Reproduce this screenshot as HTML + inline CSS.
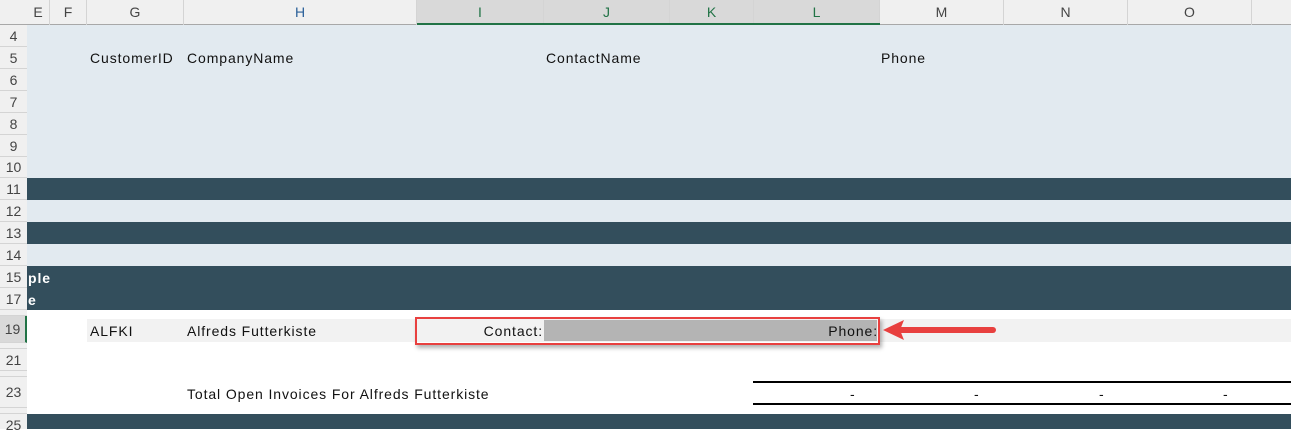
<!DOCTYPE html>
<html><head><style>
body{margin:0;width:1291px;height:429px;overflow:hidden;background:#fff;font-family:"Century Gothic","Liberation Sans",sans-serif;position:relative}
div{position:absolute;box-sizing:border-box}
.t{font-size:14px;color:#111;white-space:nowrap;line-height:16px;letter-spacing:0.9px}
.ch{top:0;height:25px;font-size:14px;color:#444;text-align:center;line-height:25px;border-right:1px solid #d4d4d4}
.rh{left:0;width:27px;font-size:14px;color:#444;text-align:center;background:#f0f0f0;border-bottom:1px solid #d4d4d4}
.dk{left:27px;width:1264px;background:#334e5c}
.lt{left:27px;width:1264px;background:#e2eaf0}
</style></head><body>
<div style="left:0;top:0;width:1291px;height:25px;background:#f0f0f0;border-bottom:1px solid #a8a8a8"></div>
<div style="left:417px;top:0;width:463px;height:25px;background:#d9d9d9;border-bottom:2px solid #217346"></div>
<div class="ch" style="left:27px;width:23px">E</div>
<div class="ch" style="left:50px;width:37px">F</div>
<div class="ch" style="left:87px;width:97px">G</div>
<div class="ch" style="left:184px;width:233px;color:#2a6099">H</div>
<div class="ch" style="left:417px;width:127px;color:#217346;height:23px">I</div>
<div class="ch" style="left:544px;width:126px;color:#217346;height:23px">J</div>
<div class="ch" style="left:670px;width:84px;color:#217346;height:23px">K</div>
<div class="ch" style="left:754px;width:126px;color:#217346;height:23px">L</div>
<div class="ch" style="left:880px;width:124px">M</div>
<div class="ch" style="left:1004px;width:124px">N</div>
<div class="ch" style="left:1128px;width:124px">O</div>
<div style="left:0;top:25px;width:27px;height:404px;background:#f0f0f0;border-right:1px solid #a8a8a8"></div>

<div class="lt" style="top:25px;height:153px"></div>
<div class="dk" style="top:178px;height:22px"></div>
<div class="lt" style="top:200px;height:22px"></div>
<div class="dk" style="top:222px;height:22px"></div>
<div class="lt" style="top:244px;height:22px"></div>
<div class="dk" style="top:266px;height:44px"></div>
<div class="dk" style="top:414px;height:15px"></div>

<div class="rh" style="top:25px;height:22px;line-height:22px">4</div>
<div class="rh" style="top:47px;height:22px;line-height:22px">5</div>
<div class="rh" style="top:69px;height:22px;line-height:22px">6</div>
<div class="rh" style="top:91px;height:22px;line-height:22px">7</div>
<div class="rh" style="top:113px;height:22px;line-height:22px">8</div>
<div class="rh" style="top:135px;height:22px;line-height:22px">9</div>
<div class="rh" style="top:157px;height:21px;line-height:21px">10</div>
<div class="rh" style="top:178px;height:22px;line-height:22px">11</div>
<div class="rh" style="top:200px;height:22px;line-height:22px">12</div>
<div class="rh" style="top:222px;height:22px;line-height:22px">13</div>
<div class="rh" style="top:244px;height:22px;line-height:22px">14</div>
<div class="rh" style="top:266px;height:22px;line-height:22px">15</div>
<div class="rh" style="top:288px;height:22px;line-height:22px">17</div>
<div class="rh" style="top:310px;height:6px"></div>
<div class="rh" style="top:316px;height:27px;line-height:27px;background:#d9d9d9;border-right:2px solid #217346">19</div>
<div class="rh" style="top:343px;height:6px"></div>
<div class="rh" style="top:349px;height:22px;line-height:22px">21</div>
<div class="rh" style="top:371px;height:6px"></div>
<div class="rh" style="top:377px;height:31px;line-height:31px">23</div>
<div class="rh" style="top:408px;height:6px"></div>
<div class="rh" style="top:414px;height:15px;line-height:22px;border:0">25</div>

<div class="t" style="left:90px;top:50px">CustomerID</div>
<div class="t" style="left:187px;top:50px">CompanyName</div>
<div class="t" style="left:546px;top:50px">ContactName</div>
<div class="t" style="left:881px;top:50px">Phone</div>
<div class="t" style="left:28px;top:270px;color:#fff;font-weight:bold">ple</div>
<div class="t" style="left:28px;top:292px;color:#fff;font-weight:bold">e</div>

<div style="left:87px;top:319px;width:1204px;height:23px;background:#f2f2f2"></div>
<div class="t" style="left:90px;top:323px">ALFKI</div>
<div class="t" style="left:187px;top:323px">Alfreds Futterkiste</div>
<div style="left:544px;top:320px;width:333px;height:21px;background:#b4b4b4"></div>
<div class="t" style="left:417px;width:126px;text-align:right;top:323px">Contact:</div>
<div class="t" style="left:760px;width:118px;text-align:right;top:323px">Phone:</div>
<div style="left:415px;top:317px;width:465px;height:28px;border:2px solid #e8403f;box-shadow:2px 3px 4px rgba(0,0,0,.3)"></div>
<svg style="position:absolute;left:880px;top:318px" width="120" height="26"><line x1="20" y1="12" x2="113" y2="12" stroke="#e8403f" stroke-width="6" stroke-linecap="round"/><polygon points="3,12 24,2 20,12 24,22" fill="#e8403f"/></svg>

<div class="t" style="left:187px;top:386px">Total Open Invoices For Alfreds Futterkiste</div>
<div style="left:753px;top:381px;width:538px;height:2px;background:#000"></div>
<div style="left:753px;top:403px;width:538px;height:2px;background:#000"></div>
<div class="t" style="left:850px;top:386px">-</div>
<div class="t" style="left:974px;top:386px">-</div>
<div class="t" style="left:1099px;top:386px">-</div>
<div class="t" style="left:1223px;top:386px">-</div>
</body></html>
